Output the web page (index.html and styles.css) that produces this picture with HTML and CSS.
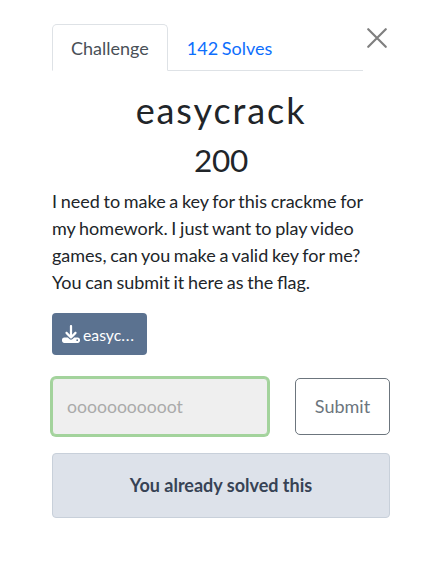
FILE: index.html
```html
<!DOCTYPE html>
<html lang="en">
<head>
<meta charset="utf-8">
<title>Challenge</title>
<link rel="stylesheet" href="styles.css">
</head>
<body>
<main class="modal">
  <header class="top">
    <nav class="tabs">
      <a class="tab active">Challenge</a>
      <a class="tab">142 Solves</a>
    </nav>
    <button class="close" aria-label="Close"><svg viewBox="0 0 16 16"><path d="M1 1 15 15M15 1 1 15"/></svg></button>
  </header>
  <h2 class="name">easycrack</h2>
  <h3 class="value">200</h3>
  <p class="desc">I need to make a key for this crackme for my homework. I just want to play video games, can you make a valid key for me? You can submit it here as the flag.</p>
  <a class="file"><svg viewBox="0 0 512 512"><path d="M288 32c0-17.700-14.300-32-32-32s-32 14.300-32 32v242.700l-73.400-73.400c-12.500-12.500-32.800-12.500-45.300 0s-12.500 32.800 0 45.300l128 128c12.500 12.500 32.800 12.500 45.300 0l128-128c12.500-12.500 12.500-32.800 0-45.300s-32.800-12.500-45.300 0L288 274.700V32zM64 352c-35.300 0-64 28.700-64 64v32c0 35.300 28.700 64 64 64h384c35.300 0 64-28.700 64-64v-32c0-35.300-28.700-64-64-64H346.500l-45.300 45.300c-25 25-65.500 25-90.500 0L165.500 352H64zm368 56a24 24 0 1 1 0 48 24 24 0 1 1 0-48z"/></svg><small>easyc<span class="dots">...</span></small></a>
  <form class="submit-row">
    <input class="flag" value="ooooooooooot" disabled>
    <button class="submit" type="button">Submit</button>
  </form>
  <div class="notice"><strong>You already solved this</strong></div>
</main>
</body>
</html>
```

FILE: styles.css
```css
* { box-sizing: border-box; }
body { margin: 0; background: #fff; color: #212529; font: 18px/27px Lato, sans-serif; word-spacing: -0.95px; }
.modal { width: 338px; margin: 24px 0 0 52px; }
.top { display: flex; justify-content: space-between; height: 47px; }
.tabs { display: flex; width: 311px; border-bottom: 1px solid #dee2e6; }
.tab { height: 47px; padding: 10px 18px; border: 1px solid transparent; color: #0d6efd; }
.tab.active { color: #495057; background: #fff; border-color: #dee2e6 #dee2e6 #fff; border-radius: 5px 5px 0 0; }
.close { width: 20px; height: 20px; margin: 4px 3px 0 0; padding: 0; border: 0; background: none; }
.close svg { display: block; width: 20px; height: 20px; fill: none; stroke: #7f7f7f; stroke-width: 1.75; stroke-linecap: round; }
.name, .value { margin: 0; font-weight: 400; text-align: center; }
.name { padding-top: 17px; font-size: 36px; line-height: 45px; letter-spacing: 1.9px; }
.value { padding-top: 8px; font-size: 31.5px; line-height: 38px; letter-spacing: -0.3px; }
.desc { margin: 9px -10px 0 0; width: 320px; }
.file { display: flex; align-items: center; gap: 4px; width: 95px; height: 42px; margin-top: 17px; padding: 0 10px; border-radius: 4px; background: #5b7290; color: #fff; }
.file svg { width: 18px; height: 18px; margin-right: -1px; fill: #fff; }
.file small { font-size: 15.75px; }
.dots { letter-spacing: 0.8px; }
.submit-row { display: flex; justify-content: space-between; margin: 23px 0 0; }
.flag { width: 216px; height: 57px; padding: 0 14px 1px; border: 1px solid #a3d39c; border-radius: 4px; box-shadow: 0 0 0 2px #a3d39c; background: #efefef; color: #aaa; font: inherit; font-size: 17.6px; }
.submit { width: 95px; height: 57px; padding: 0; border: 1px solid #6c757d; border-radius: 5px; background: #fff; color: #6c757d; font: inherit; }
.notice { height: 65px; margin-top: 18px; border: 1px solid #c8d0da; border-radius: 4px; background: #dde2ea; color: #374355; line-height: 63px; text-align: center; word-spacing: 0; }
```
